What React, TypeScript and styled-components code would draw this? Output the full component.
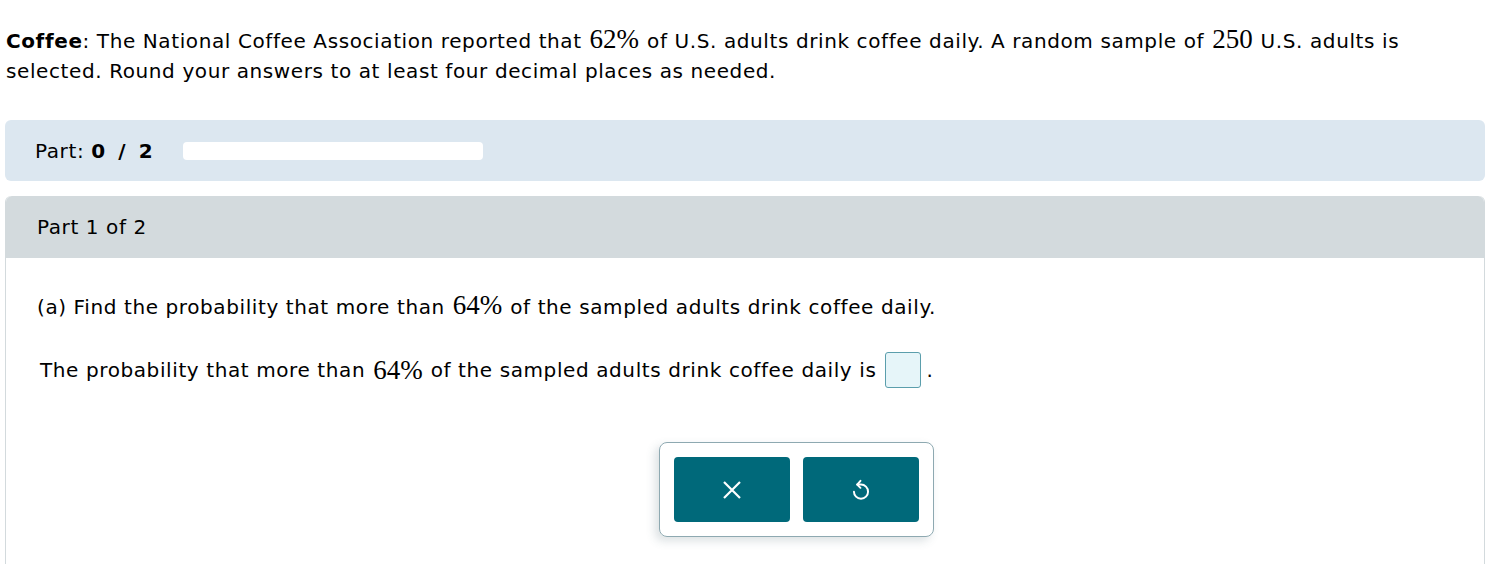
import styled, { createGlobalStyle } from "styled-components";

const GlobalStyle = createGlobalStyle`
  body {
    margin: 0;
    background: #ffffff;
    font-family: "DejaVu Sans", Verdana, sans-serif;
    color: #000000;
  }
`;

const Page = styled.div`
  padding: 26px 1px 0 5px;
  letter-spacing: 0.6px;
`;

const Intro = styled.p`
  margin: 0 0 34px 1px;
  font-size: 20px;
  line-height: 30px;
`;

const Math = styled.span`
  font-family: "Liberation Serif", "Times New Roman", serif;
  font-size: 27px;
  letter-spacing: 0;
  line-height: 1;
  margin: 0 1px;
`;

const ProgressBar = styled.div`
  display: flex;
  align-items: center;
  gap: 30px;
  height: 61px;
  padding: 0 30px;
  background: #dce7f0;
  border-radius: 6px;
  font-size: 20px;
`;

const Score = styled.b`
  word-spacing: 5px;
`;

const Track = styled.div`
  width: 300px;
  height: 18px;
  background: #ffffff;
  border-radius: 4px;
`;

const PartPanel = styled.section`
  margin-top: 15px;
  border: 1px solid #d3dadd;
  border-top: none;
  border-radius: 6px 6px 0 0;
  min-height: 380px;
`;

const PartHeader = styled.div`
  display: flex;
  align-items: center;
  height: 62px;
  padding: 0 31px;
  background: #d3dadd;
  border-radius: 6px 6px 0 0;
  font-size: 20px;
`;

const PartBody = styled.div`
  padding: 34px 0 0 31px;
  font-size: 20px;
  line-height: 30px;
`;

const Question = styled.p`
  margin: 0 0 30px;
`;

const Answer = styled.p`
  display: flex;
  align-items: center;
  margin: 0 0 0 3px;
`;

const AnswerBox = styled.span`
  display: inline-block;
  width: 34px;
  height: 34px;
  margin: 0 5px 0 9px;
  background: #e6f5f9;
  border: 1.5px solid #5b9eac;
  border-radius: 3px;
`;

const ButtonTray = styled.div`
  display: flex;
  gap: 13px;
  width: fit-content;
  margin: 54px 0 0 622px;
  padding: 14px;
  border: 1px solid #8ea9b1;
  border-radius: 8px;
  box-shadow: -4px 4px 10px rgba(60, 90, 100, 0.18);
`;

const ActionButton = styled.button`
  display: flex;
  align-items: center;
  justify-content: center;
  width: 116px;
  height: 65px;
  padding: 0;
  border: none;
  border-radius: 4px;
  background: #00697a;
  color: #ffffff;
  cursor: pointer;
`;

const App = () => (
  <Page>
    <GlobalStyle />
    <Intro>
      <b>Coffee</b>: The National Coffee Association reported that <Math>62%</Math> of U.S.
      adults drink coffee daily. A random sample of <Math>250</Math> U.S. adults is selected.
      Round your answers to at least four decimal places as needed.
    </Intro>

    <ProgressBar>
      <span>
        Part: <Score>0 / 2</Score>
      </span>
      <Track />
    </ProgressBar>

    <PartPanel>
      <PartHeader>Part 1 of 2</PartHeader>
      <PartBody>
        <Question>
          (a) Find the probability that more than <Math>64%</Math> of the sampled adults drink
          coffee daily.
        </Question>
        <Answer>
          The probability that more than&nbsp;<Math>64%</Math>&nbsp;of the sampled adults drink
          coffee daily is
          <AnswerBox />.
        </Answer>
        <ButtonTray>
          <ActionButton aria-label="Clear">
            <svg width="22" height="22" viewBox="0 0 22 22" fill="none" stroke="#fff" strokeWidth="2.2">
              <path d="M3 3 L19 19 M19 3 L3 19" />
            </svg>
          </ActionButton>
          <ActionButton aria-label="Undo">
            <svg width="26" height="26" viewBox="0 0 24 24" fill="none" stroke="#fff" strokeWidth="1.8" strokeLinecap="round" strokeLinejoin="round">
              <path d="M11.5 3.5 L8.5 7 L11.5 10" />
              <path d="M8.5 7 H12 A6.5 6.5 0 1 1 5.5 13.5" />
            </svg>
          </ActionButton>
        </ButtonTray>
      </PartBody>
    </PartPanel>
  </Page>
);

export default App;
